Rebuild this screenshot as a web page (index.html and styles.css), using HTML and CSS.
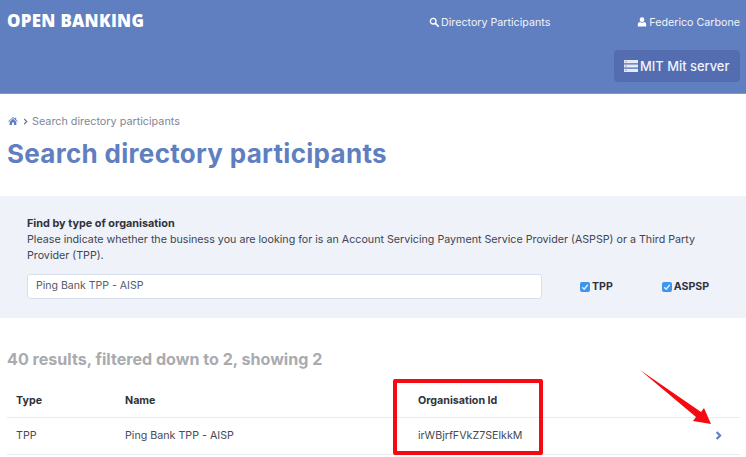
FILE: index.html
```html
<!DOCTYPE html>
<html lang="en">
<head>
<meta charset="utf-8">
<title>Search directory participants</title>
<link rel="stylesheet" href="styles.css">
</head>
<body>
<header class="top">
  <div class="top-row">
    <div class="logo">OPEN BANKING</div>
    <nav class="nav">
      <a class="nav-link nav-dir"><svg class="ico" viewBox="0 0 12 12"><circle cx="5" cy="5" r="3.4" fill="none" stroke="#fff" stroke-width="1.6"/><path d="M7.6 7.6 11 11" stroke="#fff" stroke-width="1.9" stroke-linecap="round"/></svg>Directory Participants</a>
      <a class="nav-link"><svg class="ico" viewBox="0 0 12 12"><circle cx="6" cy="3.2" r="2.8" fill="#fff"/><path d="M1 11.5V8.6C1 6.8 2.4 6 3.6 6c.7.6 1.5.9 2.4.9S7.700 6.600 8.400 6C9.600 6 11 6.800 11 8.600v2.900z" fill="#fff"/></svg>Federico Carbone</a>
    </nav>
  </div>
  <div class="server-row">
    <button class="server"><svg class="srv" viewBox="0 0 14 12"><path d="M0 0h14v3.200H0zM0 4.400h14v3.200H0zM0 8.800h14V12H0z" fill="#e4e9f4"/><path d="M1.500 1.600h1M1.500 6h1M1.500 10.400h1" stroke="#5b74b0" stroke-width="1"/></svg>MIT Mit server</button>
  </div>
</header>
<main>
  <div class="crumbs">
    <svg class="home" viewBox="0 0 12 10"><path d="M6 0 0 5.200l.6.700L6 1.300l5.400 4.600.6-.7-2-1.700V1H8.600v1.200zM1.800 6v4h3V7h2.400v3h3V6L6 2.300z" fill="#5f7fc0"/></svg>
    <svg class="sep" viewBox="0 0 6 8"><path d="M1.500 1 4.500 4l-3 3" fill="none" stroke="#666f80" stroke-width="1.300"/></svg>
    <span>Search directory participants</span>
  </div>
  <h1 class="title">Search directory participants</h1>
  <section class="panel">
    <div class="panel-head">Find by type of organisation</div>
    <p class="panel-text">Please indicate whether the business you are looking for is an Account Servicing Payment Service Provider (ASPSP) or a Third Party Provider (TPP).</p>
    <div class="filter-row">
      <div class="search">Ping Bank TPP - AISP</div>
      <label class="check check-tpp"><span class="box"><svg viewBox="0 0 9 9"><path d="M2 4.700 3.800 6.500 7 2.500" fill="none" stroke="#dcebff" stroke-width="1.300"/></svg></span>TPP</label>
      <label class="check"><span class="box"><svg viewBox="0 0 9 9"><path d="M2 4.700 3.800 6.500 7 2.500" fill="none" stroke="#dcebff" stroke-width="1.300"/></svg></span>ASPSP</label>
    </div>
  </section>
  <h2 class="count">40 results, filtered down to 2, showing 2</h2>
  <div class="table">
    <div class="row head"><span class="c1">Type</span><span class="c2">Name</span><span class="c3">Organisation Id</span><span class="c4"></span></div>
    <div class="row"><span class="c1">TPP</span><span class="c2">Ping Bank TPP - AISP</span><span class="c3">irWBjrfFVkZ7SElkkM</span><span class="c4"><svg class="chev" viewBox="0 0 8 10"><path d="M1.800 1 5.800 5l-4 4" fill="none" stroke="#5f7fc0" stroke-width="2.500"/></svg></span></div>
  </div>
</main>
<div class="mark-box"></div>
<svg class="mark-arrow" viewBox="0 0 80 70"><path d="M1 1 62 43 65 39 72 55 54 52 57 48z" fill="#f50a12"/></svg>
</body>
</html>
```

FILE: styles.css
```css
* { box-sizing: border-box; }
html, body { margin: 0; padding: 0; }
body {
  width: 746px;
  height: 457px;
  overflow: hidden;
  position: relative;
  background: #fff;
  color: #3a3f4a;
  font-family: Inter, "Liberation Sans", sans-serif;
}
.top {
  height: 94px;
  background: #607fc0;
  border-bottom: 1px solid #7d97cf;
  padding: 0 6px 0 7px;
}
.top-row {
  display: flex;
  justify-content: space-between;
  height: 50px;
}
.logo {
  font-family: "Open Sans", sans-serif;
  font-size: 16.900px;
  font-weight: 800;
  color: #fff;
  line-height: 20px;
  padding-top: 11px;
  letter-spacing: 0.300px;
}
.nav { display: flex; padding-top: 14px; }
.nav-link {
  display: flex;
  align-items: center;
  height: 16px;
  font-size: 10.700px;
  color: #f0f3fa;
}
.nav-dir { margin-right: 87px; }
.ico { width: 10px; height: 10px; margin-right: 2px; }
.server-row { display: flex; justify-content: flex-end; }
.server {
  display: flex;
  align-items: center;
  width: 126px;
  height: 32px;
  padding: 0 0 0 10px;
  border: 0;
  border-radius: 4px;
  background: #536db0;
  color: #f0f3fa;
  font: 500 12.900px Inter, sans-serif;
}
.srv { width: 14px; height: 12px; margin-right: 2px; }
main { padding: 0; }
.crumbs {
  display: flex;
  align-items: center;
  height: 16px;
  margin: 19px 0 0 8px;
  font-size: 10.800px;
  color: #7f8696;
}
.home { width: 10px; height: 8px; margin-right: 5px; }
.sep { width: 5px; height: 7px; margin-right: 4px; }
.title {
  margin: 8px 0 0 7px;
  height: 34px;
  font-size: 26px;
  line-height: 34px;
  font-weight: 700;
  color: #607fc0;
  letter-spacing: 0.300px;
}
.panel {
  margin-top: 25px;
  height: 122px;
  background: #eff2f9;
  padding: 19px 0 0 27px;
}
.panel-head {
  height: 17px;
  font-size: 10.850px;
  line-height: 16px;
  font-weight: 700;
  color: #2f333c;
}
.panel-text {
  margin: 0;
  width: 690px;
  font-size: 10.700px;
  line-height: 16px;
  color: #3f4450;
}
.filter-row {
  display: flex;
  align-items: center;
  margin-top: 10px;
}
.search {
  width: 515px;
  height: 25px;
  border: 1px solid #d7deee;
  border-radius: 3px;
  background: #fff;
  padding-left: 8px;
  font-size: 10.550px;
  line-height: 22px;
  color: #555b68;
}
.check {
  display: flex;
  align-items: center;
  font-size: 10.600px;
  font-weight: 700;
  color: #2f333c;
}
.check-tpp { margin: 0 49px 0 38px; }
.box {
  display: block;
  width: 10px;
  height: 10px;
  margin-right: 2px;
  border-radius: 2px;
  background: #3f94ec;
}
.box svg { display: block; width: 10px; height: 10px; }
.count {
  margin: 32px 0 0 7px;
  height: 18px;
  font-size: 16.100px;
  line-height: 18px;
  font-weight: 700;
  color: #a9abb0;
}
.table { margin: 14px 6px 0 7px; }
.row {
  display: flex;
  align-items: center;
  height: 37px;
  padding-bottom: 1px;
  border-bottom: 1px solid #e9eaee;
  font-size: 10.700px;
  color: #444955;
}
.head { height: 36px; padding: 2px 0 0; font-weight: 700; color: #2f333c; }
.c1 { width: 110px; padding-left: 9px; }
.c2 { width: 293px; padding-left: 8px; }
.c3 { width: 280px; padding-left: 8px; }
.c4 { flex: 1; display: flex; justify-content: flex-end; padding-right: 18px; }
.chev { display: block; width: 7px; height: 9px; }
.mark-box {
  position: absolute;
  left: 393px;
  top: 379px;
  width: 150px;
  height: 76px;
  border: 4px solid #f50a12;
  border-radius: 2px;
}
.mark-arrow {
  position: absolute;
  left: 639px;
  top: 369px;
  width: 80px;
  height: 70px;
}
```
